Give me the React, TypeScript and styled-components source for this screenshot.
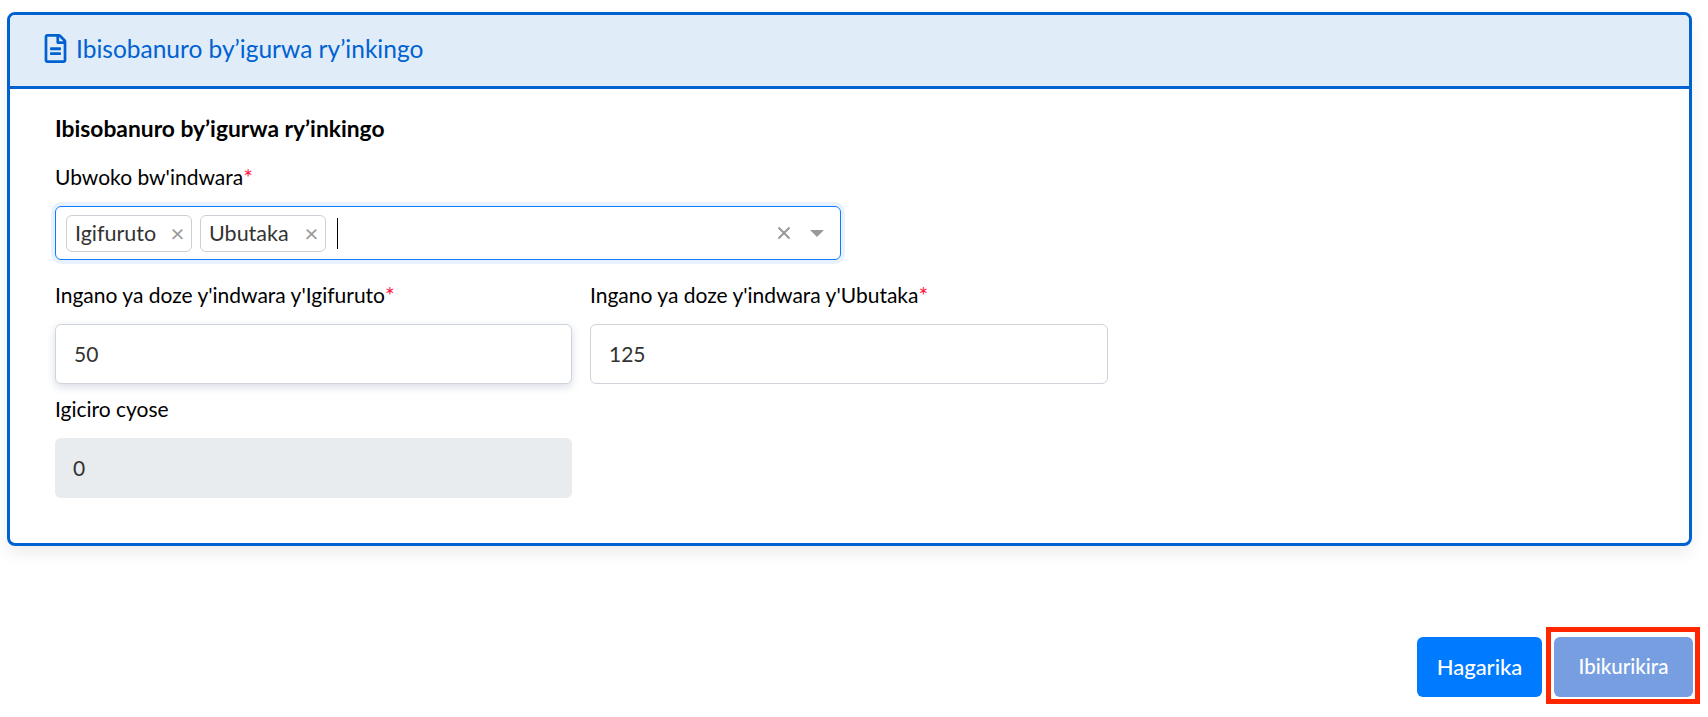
import React from 'react';
import styled, { createGlobalStyle } from 'styled-components';
import { FaRegFileAlt } from 'react-icons/fa';

const GlobalStyle = createGlobalStyle`
  html, body {
    margin: 0;
    padding: 0;
    background: #fff;
    font-family: Lato, "Noto Sans", sans-serif;
    color: #000;
  }
  * { box-sizing: border-box; }
`;

const App = () => {
  return (
    <Page>
      <GlobalStyle />
      <Card>
        <CardHeader>
          <FaRegFileAlt size={29} />
          <span>Ibisobanuro by’igurwa ry’inkingo</span>
        </CardHeader>
        <CardBody>
          <Heading>Ibisobanuro by’igurwa ry’inkingo</Heading>
          <Label>
            Ubwoko bw'indwara<Req>*</Req>
          </Label>
          <Select>
            <Tag>
              Igifuruto<TagClose>×</TagClose>
            </Tag>
            <Tag>
              Ubutaka<TagClose>×</TagClose>
            </Tag>
            <Caret />
            <ClearIcon viewBox="0 0 14 14">
              <path d="M1.5 1.5l11 11M12.5 1.5l-11 11" />
            </ClearIcon>
            <Arrow />
          </Select>
          <Fields>
            <Field>
              <Label>
                Ingano ya doze y'indwara y'Igifuruto<Req>*</Req>
              </Label>
              <Input $shadow readOnly value="50" />
            </Field>
            <Field>
              <Label>
                Ingano ya doze y'indwara y'Ubutaka<Req>*</Req>
              </Label>
              <Input readOnly value="125" />
            </Field>
            <Field>
              <Label>Igiciro cyose</Label>
              <Input $disabled disabled value="0" />
            </Field>
          </Fields>
        </CardBody>
      </Card>
      <Actions>
        <Button $width={125}>Hagarika</Button>
        <Highlighted>
          <Button $width={139} $muted>
            Ibikurikira
          </Button>
        </Highlighted>
      </Actions>
    </Page>
  );
};

const Page = styled.div`
  height: 717px;
  padding: 12px 15px 0 7px;
  overflow: hidden;
`;
const Card = styled.div`
  height: 534px;
  margin-right: 1px;
  border: 3px solid #0062d1;
  border-radius: 8px;
  box-shadow: 0 8px 16px rgba(0, 0, 0, 0.07);
  overflow: hidden;
`;
const CardHeader = styled.div`
  height: 74px;
  padding: 0 0 4px 31px;
  display: flex;
  align-items: center;
  gap: 6px;
  background: #e0ecf8;
  border-bottom: 3px solid #0062d1;
  color: #0062d1;
  font-size: 24.5px;
`;
const CardBody = styled.div`
  padding: 23px 0 0 45px;
`;
const Heading = styled.div`
  height: 32px;
  margin-bottom: 20px;
  display: flex;
  align-items: center;
  font-size: 22.8px;
  font-weight: 700;
`;
const Label = styled.div`
  height: 28px;
  padding-bottom: 3px;
  display: flex;
  align-items: center;
  font-size: 21px;
`;
const Req = styled.span`
  color: #ff1744;
  font-size: 23px;
`;
const Select = styled.div`
  width: 786px;
  height: 54px;
  margin-top: 14px;
  padding: 0 16px 0 10px;
  display: flex;
  align-items: center;
  gap: 8.5px;
  border: 1px solid #0d7bff;
  border-radius: 6px;
  box-shadow: 0 0 0 4px #e8f2ff;
  color: #333;
`;
const Tag = styled.div`
  width: 125.5px;
  height: 37px;
  padding: 0 6px 0 8px;
  display: flex;
  align-items: center;
  justify-content: space-between;
  border: 1px solid #ccd0d6;
  border-radius: 6px;
  font-size: 21.5px;
`;
const TagClose = styled.span`
  color: #999;
  font-size: 24px;
  line-height: 1;
`;
const Caret = styled.div`
  width: 1px;
  height: 31px;
  margin-left: 3px;
  background: #000;
`;
const ClearIcon = styled.svg`
  width: 14px;
  height: 14px;
  margin-left: auto;
  margin-right: 10.5px;
  fill: none;
  stroke: #999;
  stroke-width: 2;
`;
const Arrow = styled.div`
  width: 0;
  height: 0;
  border-left: 7px solid transparent;
  border-right: 7px solid transparent;
  border-top: 7px solid #999;
`;
const Fields = styled.div`
  width: 1053px;
  margin-top: 22px;
  display: grid;
  grid-template-columns: 517px 518px;
  column-gap: 18px;
  row-gap: 12px;
`;
const Field = styled.div`
  display: flex;
  flex-direction: column;
  gap: 14px;
`;
const Input = styled.input<{ $shadow?: boolean; $disabled?: boolean }>`
  width: 100%;
  height: 60px;
  padding: 0 18px 2px;
  border: ${(p) => (p.$disabled ? 'none' : '1px solid #ced4da')};
  border-radius: 6px;
  background: ${(p) => (p.$disabled ? '#e9ecef' : '#fff')};
  box-shadow: ${(p) => (p.$shadow ? '0 3px 8px rgba(60, 80, 120, 0.2)' : 'none')};
  color: #333;
  font-family: inherit;
  font-size: 21px;
  outline: none;
`;
const Actions = styled.div`
  margin-top: 91px;
  display: flex;
  justify-content: flex-end;
  gap: 12px;
`;
const Button = styled.div<{ $muted?: boolean; $width: number }>`
  width: ${(p) => p.$width}px;
  height: 60px;
  padding-bottom: 2px;
  display: flex;
  align-items: center;
  justify-content: center;
  border-radius: 6px;
  background: ${(p) => (p.$muted ? '#769ee0' : '#007bff')};
  color: #fff;
  font-size: ${(p) => (p.$muted ? '20.5px' : '22px')};
  font-weight: 500;
`;
const Highlighted = styled.div`
  position: relative;
  &::after {
    content: '';
    position: absolute;
    inset: -10px -7px -7px -8px;
    border: 5px solid #ff2600;
  }
`;

export default App;
